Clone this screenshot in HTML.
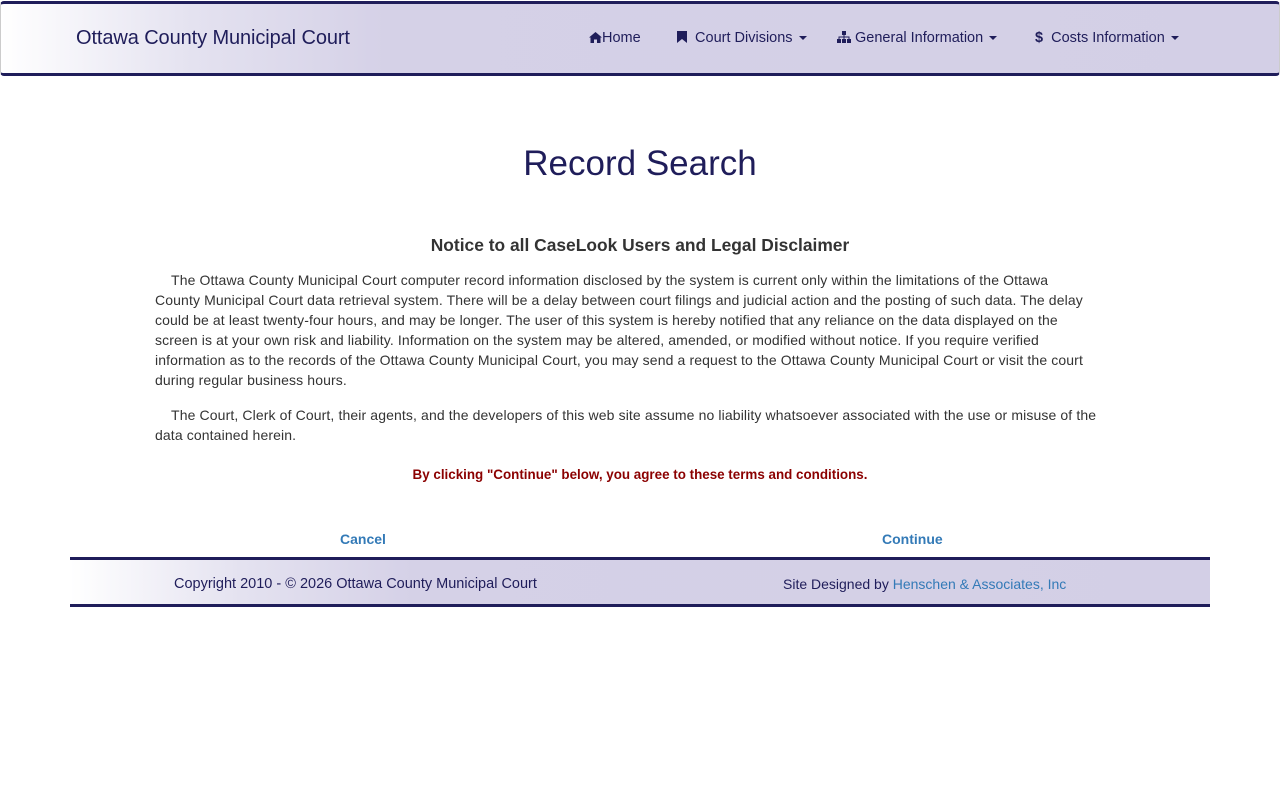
<!DOCTYPE html>
<html><head><meta charset="utf-8"><style>
*{box-sizing:border-box}
body{margin:0;font-family:"Liberation Sans",sans-serif;background:#fff;color:#333;width:1280px;height:800px;overflow:hidden}
.nav{position:absolute;left:0;top:1px;width:1280px;height:75px;border-top:3px solid #1f1d5a;border-bottom:3px solid #1f1d5a;border-left:1px solid #ccc;border-right:1px solid #ccc;border-radius:4px;background:linear-gradient(90deg,#fff 0%,#e4e2f0 15%,#d5d1e7 30%,#d3cfe6 100%)}
.brand{position:absolute;left:75px;top:23px;font-size:20px;color:#1f1d5a;letter-spacing:-0.1px}
.menu{position:absolute;top:26px;font-size:14.5px;color:#1f1d5a;white-space:nowrap}
.caret{display:inline-block;width:0;height:0;border-left:4px solid transparent;border-right:4px solid transparent;border-top:4px solid #1f1d5a;vertical-align:middle;margin-left:6px}
h1{position:absolute;top:144px;left:0;width:1280px;text-align:center;margin:0;font-weight:normal;font-size:35px;color:#1f1d5a}
h3{position:absolute;top:235px;left:0;width:1280px;text-align:center;margin:0;font-size:17.4px;color:#333}
.txt{position:absolute;left:155px;width:1000px;font-size:14px;line-height:20px;color:#333;letter-spacing:0.12px;white-space:nowrap}
.txt p{margin:0 0 15px}
.agree{position:absolute;top:467px;left:0;width:1280px;text-align:center;font-size:13.4px;font-weight:bold;color:#8b0000}
.btn{position:absolute;top:531px;font-size:14px;font-weight:bold;color:#337ab7}
.foot{position:absolute;left:70px;top:557px;width:1140px;height:50px;border-top:3px solid #1f1d5a;border-bottom:3px solid #1f1d5a;background:linear-gradient(90deg,#fff 0%,#e4e2f0 15%,#d5d1e7 30%,#d3cfe6 100%);font-size:14.5px;color:#1f1d5a}
.foot span{position:absolute;top:16px}
</style></head><body>
<div class="nav">
<div class="brand">Ottawa County Municipal Court</div>
<div class="menu" style="left:588px"><svg width="13" height="11" viewBox="0 0 13 11" style="vertical-align:-1px"><path d="M6.5 0L0 5.5h1.5V11h3.5V7.5h3V11H11.5V5.5H13z" fill="#1f1d5a"/></svg>Home</div>
<div class="menu" style="left:676px"><svg width="10" height="12" viewBox="0 0 10 12" style="vertical-align:-1px"><path d="M0 0h10v12L5 8 0 12z" fill="#1f1d5a"/></svg>&nbsp; Court Divisions<span class="caret"></span></div>
<div class="menu" style="left:836px"><svg width="14" height="12" viewBox="0 0 14 12" style="vertical-align:-1px"><path d="M5 0h4v4H7.5v1.5H12.5V8H14v4h-4V8h1.5V6.5h-4V8H9v4H5V8h1.5V6.5h-4V8H4v4H0V8h1.5V5.5h5V4H5z" fill="#1f1d5a"/></svg> General Information<span class="caret"></span></div>
<div class="menu" style="left:1034px"><b>$</b>&nbsp; Costs Information<span class="caret"></span></div>
</div>
<h1>Record Search</h1>
<h3>Notice to all CaseLook Users and Legal Disclaimer</h3>
<div class="txt" style="top:270px">
<p>&nbsp;&nbsp;&nbsp;&nbsp;The Ottawa County Municipal Court computer record information disclosed by the system is current only within the limitations of the Ottawa<br>County Municipal Court data retrieval system. There will be a delay between court filings and judicial action and the posting of such data. The delay<br>could be at least twenty-four hours, and may be longer. The user of this system is hereby notified that any reliance on the data displayed on the<br>screen is at your own risk and liability. Information on the system may be altered, amended, or modified without notice. If you require verified<br>information as to the records of the Ottawa County Municipal Court, you may send a request to the Ottawa County Municipal Court or visit the court<br>during regular business hours.</p>
<p>&nbsp;&nbsp;&nbsp;&nbsp;The Court, Clerk of Court, their agents, and the developers of this web site assume no liability whatsoever associated with the use or misuse of the<br>data contained herein.</p>
</div>
<div class="agree">By clicking "Continue" below, you agree to these terms and conditions.</div>
<div class="btn" style="left:340px">Cancel</div>
<div class="btn" style="left:882px">Continue</div>
<div class="foot"><span style="left:104px">Copyright 2010 - © 2026 Ottawa County Municipal Court</span><span style="left:713px;font-size:14px">Site Designed by <span style="position:static;color:#337ab7">Henschen &amp; Associates, Inc</span></span></div>
</body></html>
